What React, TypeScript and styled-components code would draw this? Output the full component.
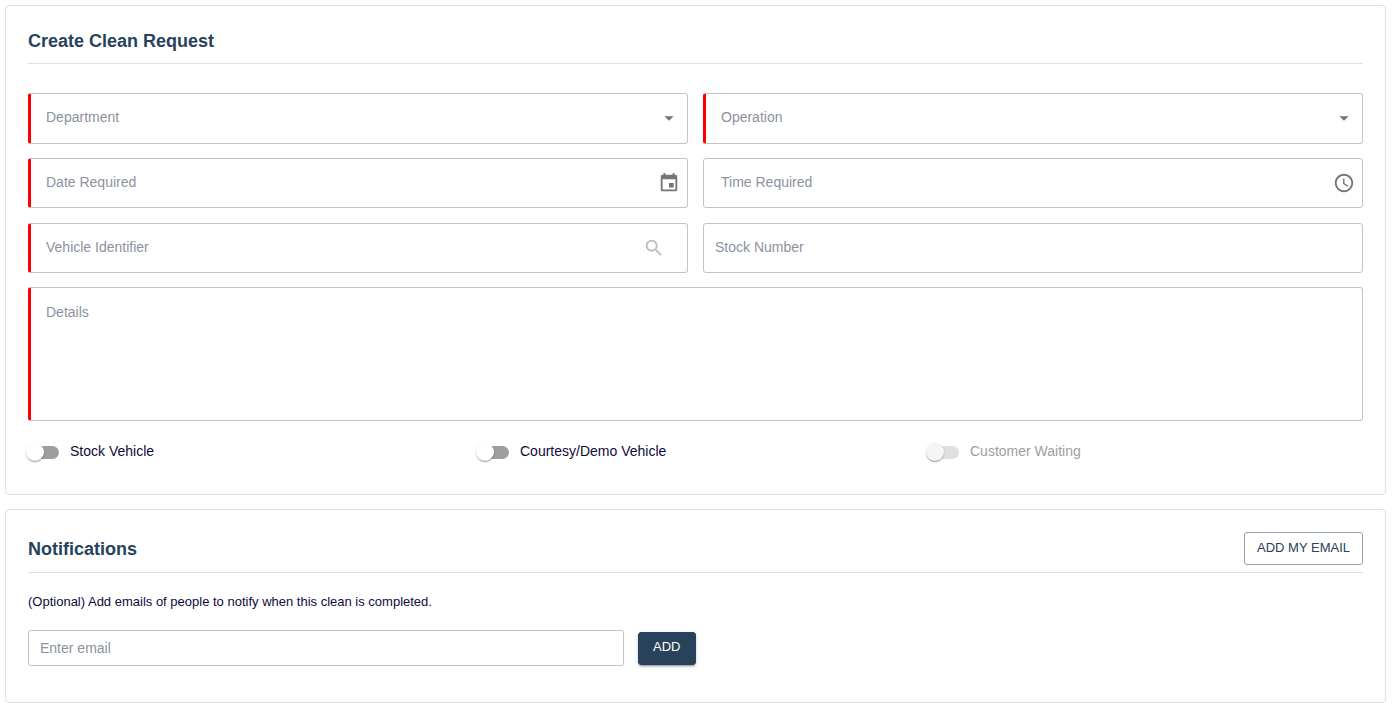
import React from "react";
import styled, { createGlobalStyle, css } from "styled-components";
import { MdAccessTime, MdArrowDropDown, MdEvent, MdSearch } from "react-icons/md";

const colors = {
  heading: "#28425b",
  text: "#0f0a3c",
  placeholder: "#8b929e",
  disabled: "#9e9e9e",
  cardBorder: "#e0e0e0",
  fieldBorder: "#c4c4c4",
  required: "#ff0000",
  icon: "#757575",
};

const GlobalStyle = createGlobalStyle`
  *, *::before, *::after { box-sizing: border-box; }
  body {
    margin: 0;
    background: #fff;
    color: ${colors.text};
    font-family: "Liberation Sans", Arial, sans-serif;
    font-size: 14px;
  }
  button, input, select, textarea { font: inherit; color: inherit; }
`;

const Page = styled.main`
  display: flex;
  flex-direction: column;
  gap: 14px;
  padding: 5px 6px 5px 5px;
`;

const Card = styled.section<{ $bottom: number }>`
  border: 1px solid ${colors.cardBorder};
  border-radius: 4px;
  padding: 22px 22px ${(p) => p.$bottom}px;
`;

const CardHeader = styled.header<{ $gap: number }>`
  display: flex;
  align-items: center;
  justify-content: space-between;
  padding-bottom: ${(p) => p.$gap}px;
  border-bottom: 1px solid ${colors.cardBorder};
`;

const Title = styled.h2`
  margin: 0;
  color: ${colors.heading};
  font-size: 18px;
  line-height: 26px;
  font-weight: 700;
`;

const Form = styled.form`
  display: grid;
  grid-template-columns: repeat(2, minmax(0, 1fr));
  grid-template-rows: 51px 51px 50px auto;
  align-items: start;
  gap: 14px 15px;
  margin-top: 29px;
`;

const Field = styled.div<{ $required?: boolean; $wide?: boolean; $inset?: number; $height?: number }>`
  position: relative;
  display: flex;
  height: ${(p) => p.$height ?? 50}px;
  border: 1px solid ${colors.fieldBorder};
  border-radius: 3px;
  padding-left: ${(p) => p.$inset ?? 15}px;
  ${(p) => p.$wide && "grid-column: 1 / -1;"}
  ${(p) => p.$required && `border-left: 3px solid ${colors.required};`}
`;

const control = css`
  flex: 1;
  min-width: 0;
  border: 0;
  outline: 0;
  padding: 0;
  background: transparent;
  line-height: 20px;
  &::placeholder {
    color: ${colors.placeholder};
    opacity: 1;
  }
`;

const TextInput = styled.input`
  ${control}
`;

const SelectInput = styled.select`
  ${control}
  appearance: none;
  color: ${colors.placeholder};
  padding-right: 36px;
  padding-bottom: 3px;
`;

const FieldInput = styled(TextInput)`
  padding-bottom: 2px;
`;

const DetailsInput = styled.textarea`
  ${control}
  resize: none;
  padding: 14px 14px 14px 0;
`;

const SelectArrow = styled(MdArrowDropDown)`
  position: absolute;
  right: 7px;
  top: 13px;
  color: ${colors.icon};
  pointer-events: none;
`;

const IconButton = styled.button<{ $right?: number; $light?: boolean }>`
  display: flex;
  align-items: center;
  border: 0;
  padding: 0;
  background: transparent;
  color: ${(p) => (p.$light ? "#bdbdbd" : colors.icon)};
  margin-right: ${(p) => p.$right ?? 7}px;
  cursor: pointer;
`;

const Switches = styled.div`
  display: grid;
  grid-template-columns: repeat(3, minmax(0, 1fr));
  gap: 15px;
  margin-top: 20px;
`;

const SwitchLabel = styled.label<{ $disabled?: boolean }>`
  display: flex;
  align-items: center;
  gap: 11px;
  line-height: 20px;
  color: ${(p) => (p.$disabled ? colors.disabled : colors.text)};
`;

const SwitchInput = styled.input`
  appearance: none;
  position: relative;
  width: 31px;
  height: 13px;
  margin: 2px 0 0;
  border-radius: 7px;
  background: #9e9e9e;

  &::before {
    content: "";
    position: absolute;
    left: -2px;
    top: -3px;
    width: 18px;
    height: 18px;
    border-radius: 50%;
    background: #fff;
    box-shadow: 0 2px 1px -1px rgba(0, 0, 0, 0.2), 0 1px 1px rgba(0, 0, 0, 0.14),
      0 1px 3px rgba(0, 0, 0, 0.12);
    transition: left 0.15s;
  }
  &:checked::before { left: 15px; }
  &:disabled { background: #e0e0e0; }
  &:disabled::before { background: #f5f5f5; }
`;

const Button = styled.button<{ $filled?: boolean }>`
  height: 33px;
  padding: 0 ${(p) => (p.$filled ? 14 : 12)}px 2px;
  border: 1px solid ${(p) => (p.$filled ? colors.heading : "#93a0ad")};
  border-radius: 3px;
  background: ${(p) => (p.$filled ? colors.heading : "#fff")};
  color: ${(p) => (p.$filled ? "#fff" : colors.heading)};
  font-size: 13px;
  line-height: 20px;
  text-transform: uppercase;
  white-space: nowrap;
  cursor: pointer;
  ${(p) =>
    p.$filled &&
    "box-shadow: 0 3px 1px -2px rgba(0,0,0,.2), 0 2px 2px rgba(0,0,0,.14), 0 1px 5px rgba(0,0,0,.12);"}
`;

const Hint = styled.p`
  margin: 21px 0 20px;
  font-size: 13px;
  line-height: 16px;
`;

const EmailRow = styled.form`
  display: flex;
  align-items: center;
  gap: 14px;
  width: 50%;
`;

const EmailField = styled(Field)`
  flex: 1;
`;

const switches = [
  { label: "Stock Vehicle" },
  { label: "Courtesy/Demo Vehicle" },
  { label: "Customer Waiting", disabled: true },
];

function SelectField({ label }: { label: string }) {
  return (
    <Field $required $height={51}>
      <SelectInput aria-label={label} defaultValue="" required>
        <option value="">{label}</option>
      </SelectInput>
      <SelectArrow size={22} />
    </Field>
  );
}

export default function App() {
  return (
    <>
      <GlobalStyle />
      <Page>
        <Card $bottom={33}>
          <CardHeader $gap={9}>
            <Title>Create Clean Request</Title>
          </CardHeader>
          <Form>
            <SelectField label="Department" />
            <SelectField label="Operation" />
            <Field $required>
              <FieldInput aria-label="Date Required" placeholder="Date Required" />
              <IconButton type="button" aria-label="Choose date">
                <MdEvent size={22} />
              </IconButton>
            </Field>
            <Field $inset={17}>
              <FieldInput aria-label="Time Required" placeholder="Time Required" />
              <IconButton type="button" aria-label="Choose time">
                <MdAccessTime size={22} />
              </IconButton>
            </Field>
            <Field $required>
              <FieldInput aria-label="Vehicle Identifier" placeholder="Vehicle Identifier" />
              <IconButton type="button" aria-label="Search vehicles" $right={22} $light>
                <MdSearch size={22} />
              </IconButton>
            </Field>
            <Field $inset={11}>
              <FieldInput aria-label="Stock Number" placeholder="Stock Number" />
            </Field>
            <Field $required $wide $height={134}>
              <DetailsInput aria-label="Details" placeholder="Details" />
            </Field>
          </Form>
          <Switches>
            {switches.map((s) => (
              <SwitchLabel key={s.label} $disabled={s.disabled}>
                <SwitchInput type="checkbox" role="switch" disabled={s.disabled} />
                {s.label}
              </SwitchLabel>
            ))}
          </Switches>
        </Card>
        <Card $bottom={36}>
          <CardHeader $gap={7}>
            <Title>Notifications</Title>
            <Button type="button">Add my email</Button>
          </CardHeader>
          <Hint>(Optional) Add emails of people to notify when this clean is completed.</Hint>
          <EmailRow onSubmit={(e) => e.preventDefault()}>
            <EmailField $inset={11} $height={36}>
              <TextInput type="email" aria-label="Enter email" placeholder="Enter email" />
            </EmailField>
            <Button type="submit" $filled>
              Add
            </Button>
          </EmailRow>
        </Card>
      </Page>
    </>
  );
}
